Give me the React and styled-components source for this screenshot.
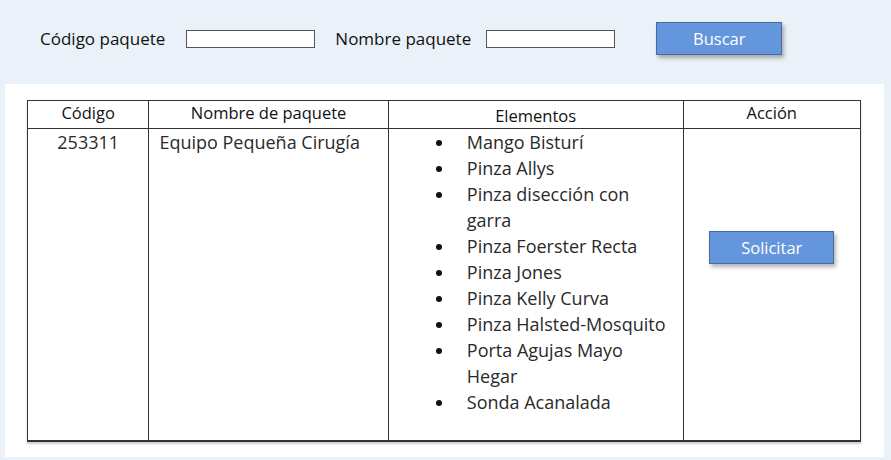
import React, { useState } from "react";
import styled, { createGlobalStyle } from "styled-components";

const GlobalStyle = createGlobalStyle`
  html, body {
    margin: 0;
    padding: 0;
    background: #eaf1f8;
  }
  body {
    font-family: "Open Sans", sans-serif;
  }
`;

const Page = styled.div`
  width: 891px;
  height: 460px;
  background: #eaf1f8;
  box-sizing: border-box;
  padding: 22px 7px 3px 5px;
  display: flex;
  flex-direction: column;
`;

const SearchBar = styled.form`
  display: flex;
  align-items: center;
  height: 33px;
  padding-left: 35px;
  margin-bottom: 29px;
`;

const Label = styled.label`
  font-size: 17px;
  font-weight: 500;
  color: #111;
  margin-right: ${(p) => p.$gap}px;
  white-space: nowrap;
`;

const Field = styled.input`
  width: 129px;
  height: 18px;
  box-sizing: border-box;
  border: 1px solid #555;
  background: #fff;
  margin: 0 ${(p) => p.$gap}px 0 0;
  outline: none;
`;

const Button = styled.button`
  width: ${(p) => p.$w}px;
  height: 33px;
  background: #6496de;
  color: #fff;
  font-family: "Open Sans", sans-serif;
  font-size: 16.5px;
  border: 1px solid #4a6a9a;
  box-shadow: 2px 3px 4px rgba(0, 0, 0, 0.3);
  cursor: pointer;
`;

const Panel = styled.div`
  flex: 1;
  background: #fff;
  padding: 16px 22px 0 22px;
`;

const Table = styled.table`
  width: 834px;
  border-collapse: collapse;
  border-bottom: 2px solid #333;
  box-shadow: 0 2px 2px rgba(0, 0, 0, 0.2);
`;

const Row = styled.tr`
  height: ${(p) => p.$h}px;
`;

const Th = styled.th`
  width: ${(p) => p.$w}px;
  border: 1.5px solid #333;
  font-weight: 500;
  font-size: 16.5px;
  line-height: 20px;
  color: #111;
  padding: ${(p) => (p.$low ? "3px 0 0" : "0 0 3px")};
  text-align: center;
`;

const Td = styled.td`
  border: 1.5px solid #333;
  vertical-align: top;
  font-size: 18px;
  color: #2a2a2a;
  line-height: 26px;
  padding: 0 0 0 ${(p) => p.$left || 0}px;
  text-align: ${(p) => p.$align || "left"};
`;

const Items = styled.ul`
  margin: 0;
  padding: 0 0 0 78px;
  list-style: none;
`;

const Item = styled.li`
  position: relative;
  max-width: 205px;
  &::before {
    content: "";
    position: absolute;
    left: -31px;
    top: 11px;
    width: 6px;
    height: 6px;
    border-radius: 50%;
    background: #111;
  }
`;

const ActionWrap = styled.div`
  padding-top: 102px;
  display: flex;
  justify-content: center;
`;

const elementos = [
  "Mango Bisturí",
  "Pinza Allys",
  "Pinza disección con garra",
  "Pinza Foerster Recta",
  "Pinza Jones",
  "Pinza Kelly Curva",
  "Pinza Halsted-Mosquito",
  "Porta Agujas Mayo Hegar",
  "Sonda Acanalada",
];

export default function App() {
  const [codigo, setCodigo] = useState("");
  const [nombre, setNombre] = useState("");

  return (
    <>
      <GlobalStyle />
      <Page>
        <SearchBar onSubmit={(e) => e.preventDefault()}>
          <Label $gap={21}>Código paquete</Label>
          <Field $gap={20} value={codigo} onChange={(e) => setCodigo(e.target.value)} />
          <Label $gap={15}>Nombre paquete</Label>
          <Field $gap={41} value={nombre} onChange={(e) => setNombre(e.target.value)} />
          <Button $w={126}>Buscar</Button>
        </SearchBar>
        <Panel>
          <Table>
            <thead>
              <Row $h={28}>
                <Th $w={121}>Código</Th>
                <Th $w={240}>Nombre de paquete</Th>
                <Th $w={295} $low>Elementos</Th>
                <Th $w={177}>Acción</Th>
              </Row>
            </thead>
            <tbody>
              <Row $h={312}>
                <Td $align="center">253311</Td>
                <Td $left={10}>Equipo Pequeña Cirugía</Td>
                <Td>
                  <Items>
                    {elementos.map((el) => (
                      <Item key={el}>{el}</Item>
                    ))}
                  </Items>
                </Td>
                <Td>
                  <ActionWrap>
                    <Button $w={125}>Solicitar</Button>
                  </ActionWrap>
                </Td>
              </Row>
            </tbody>
          </Table>
        </Panel>
      </Page>
    </>
  );
}
